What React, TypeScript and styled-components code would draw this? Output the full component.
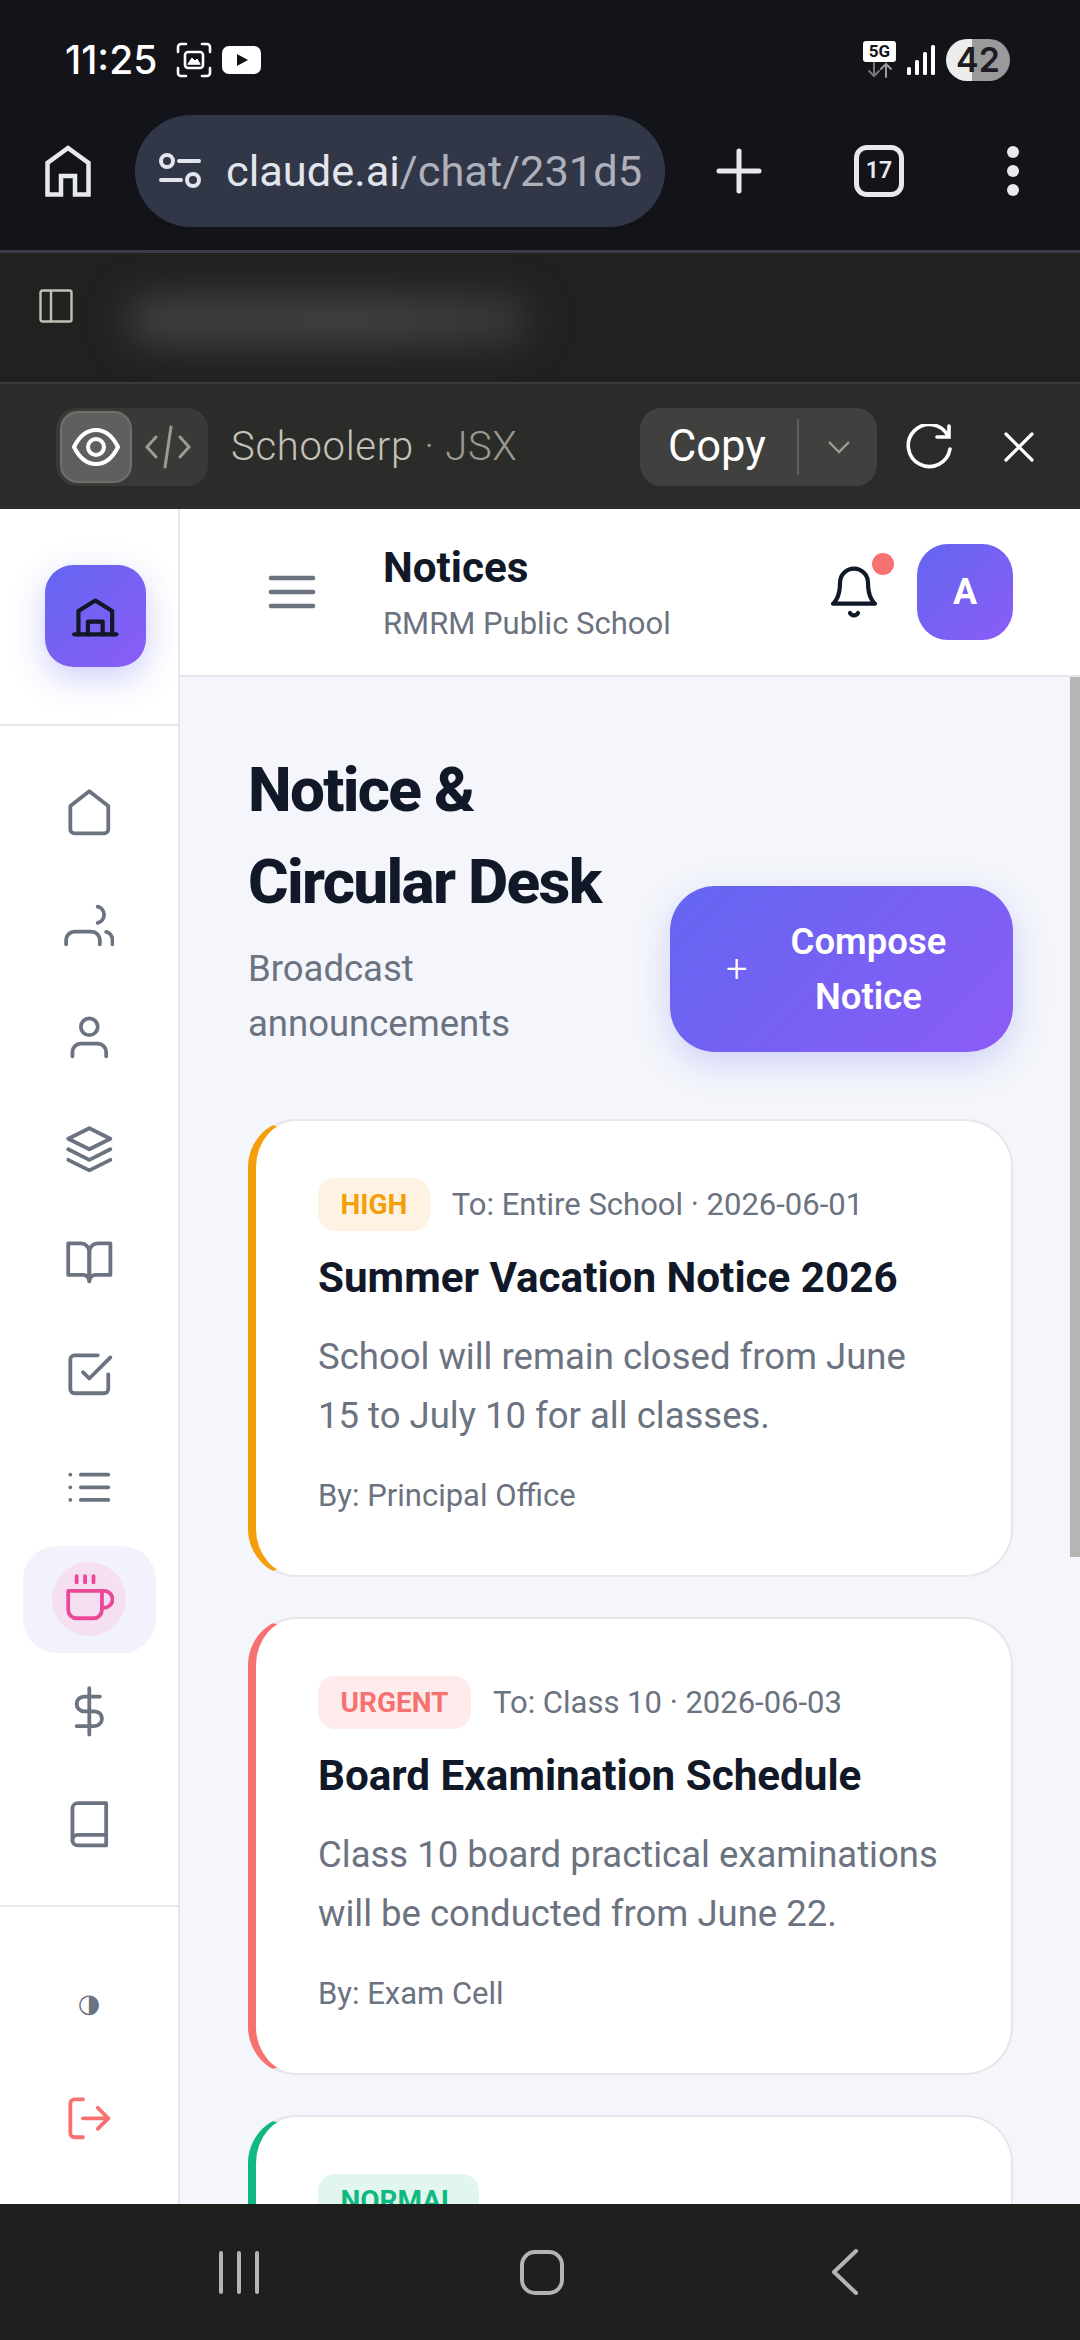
import React from 'react';
import styled, { createGlobalStyle } from 'styled-components';

const Global = createGlobalStyle`
  html, body { margin: 0; padding: 0; background: #12141a; }
  * { box-sizing: border-box; }
  body { font-family: Roboto, "Liberation Sans", sans-serif; }
`;

const Screen = styled.div`
  width: 1080px;
  height: 2340px;
  display: flex;
  flex-direction: column;
  overflow: hidden;
`;

const TopChrome = styled.div`
  background: #12141a;
  height: 253px;
  flex: none;
  border-bottom: 3px solid #3a3d47;
`;

const StatusBar = styled.div`
  height: 115px;
  display: flex;
  align-items: center;
  padding: 4px 70px 0 65px;
  color: #fff;
`;

const Time = styled.span`
  font-size: 39px;
  font-weight: 500;
  width: 111px;
  font-family: Inter, Roboto, sans-serif;
`;

const StatusRight = styled.div`
  margin-left: auto;
  display: flex;
  align-items: center;
  gap: 11px;
`;

const NetStack = styled.div`
  display: flex;
  flex-direction: column;
  align-items: center;
  width: 33px;
`;

const FiveG = styled.span`
  width: 33px;
  height: 21px;
  background: #fff;
  color: #12141a;
  border-radius: 3px;
  font-size: 17px;
  line-height: 21px;
  font-weight: 700;
  text-align: center;
`;

const Battery = styled.span`
  width: 64px;
  height: 42px;
  border-radius: 21px;
  background: linear-gradient(90deg, #ececec 0 41%, #9a9a9a 41% 100%);
  color: #1c1c22;
  font-size: 34px;
  line-height: 42px;
  font-weight: 600;
  text-align: center;
  font-family: Inter, Roboto, sans-serif;
`;

const BrowserBar = styled.div`
  height: 135px;
  display: flex;
  align-items: flex-start;
  padding-left: 45px;
`;

const HomeSlot = styled.div`
  width: 90px;
  padding-top: 30px;
`;

const UrlPill = styled.div`
  width: 530px;
  height: 112px;
  border-radius: 56px;
  background: #323748;
  display: flex;
  align-items: center;
  padding-left: 24px;
  gap: 25px;
  font-size: 43.4px;
  color: #e3e5ec;
  white-space: nowrap;
`;

const UrlPath = styled.span`
  color: #aeb1bc;
`;

const BrowserActions = styled.div`
  display: flex;
  align-items: center;
  height: 112px;
`;

const TabCount = styled.div`
  width: 50px;
  height: 52px;
  border: 5px solid #e8e9ee;
  border-radius: 13px;
  color: #e8e9ee;
  font-size: 23px;
  font-weight: 600;
  line-height: 42px;
  text-align: center;
  margin-left: 92px;
`;

const Kebab = styled.div`
  display: flex;
  flex-direction: column;
  gap: 7px;
  margin-left: 103px;
`;

const KebabDot = styled.span`
  width: 12px;
  height: 12px;
  border-radius: 50%;
  background: #e8e9ee;
`;

const ClaudeHeader = styled.div`
  height: 131px;
  flex: none;
  background: #212120;
  border-bottom: 2px solid #3a3a38;
  display: flex;
  padding: 36px 0 0 39px;
  overflow: hidden;
`;

const BlurredTitle = styled.div`
  width: 400px;
  height: 38px;
  margin: 12px 0 0 55px;
  border-radius: 19px;
  background: linear-gradient(90deg, #4a4a48, #4c4c4a 60%, #3e3e3c);
  filter: blur(21px);
`;

const ArtifactBar = styled.div`
  height: 125px;
  flex: none;
  background: #2b2b29;
  display: flex;
  align-items: center;
  padding: 0 0 0 56px;
`;

const ViewToggle = styled.div`
  width: 152px;
  height: 78px;
  border-radius: 21px;
  background: #393937;
  display: flex;
  align-items: center;
  padding-left: 4px;
`;

const ToggleActive = styled.div`
  width: 72px;
  height: 72px;
  border-radius: 18px;
  background: #5f5f5d;
  border: 2px solid #6e6e6b;
  display: flex;
  align-items: center;
  justify-content: center;
`;

const ToggleIdle = styled.div`
  width: 72px;
  display: flex;
  justify-content: center;
`;

const ArtifactName = styled.span`
  margin-left: 23px;
  font-size: 40px;
  letter-spacing: 0.7px;
  font-weight: 300;
  color: #c4c2b8;
  width: 409px;
`;

const ArtifactType = styled.span`
  color: #9a9890;
`;

const CopyGroup = styled.div`
  width: 237px;
  height: 78px;
  border-radius: 21px;
  background: #40403e;
  display: flex;
  align-items: center;
  padding-left: 28px;
  color: #fff;
  font-size: 43.5px;
  font-weight: 400;
`;

const CopyLabel = styled.span`
  width: 129px;
`;

const CopyDivider = styled.span`
  width: 2px;
  height: 56px;
  background: #5c5c5a;
  margin-right: 28px;
`;

const ToolbarIcons = styled.div`
  display: flex;
  align-items: center;
  gap: 52px;
  margin-left: 29px;
`;

const Body = styled.div`
  flex: 1;
  min-height: 0;
  display: flex;
  position: relative;
  background: #f4f6fb;
`;

const Sidebar = styled.aside`
  width: 180px;
  flex: none;
  background: #fff;
  border-right: 2px solid #e5e7eb;
  display: flex;
  flex-direction: column;
`;

const LogoArea = styled.div`
  height: 217px;
  flex: none;
  border-bottom: 2px solid #e5e7eb;
  display: flex;
  align-items: center;
  justify-content: center;
  padding: 0 0 2px 13px;
`;

const LogoBox = styled.div`
  width: 101px;
  height: 102px;
  border-radius: 28px;
  background: linear-gradient(135deg, #6366f1, #8b5cf6);
  box-shadow: 0 11px 34px rgba(99, 102, 241, 0.32);
  display: flex;
  align-items: center;
  justify-content: center;
`;

const NavList = styled.nav`
  display: flex;
  flex-direction: column;
  align-items: center;
  gap: 5.4px;
  padding: 33px 0 27px;
  border-bottom: 2px solid #e5e7eb;
`;

const FootList = styled.div`
  display: flex;
  flex-direction: column;
  align-items: center;
  gap: 8px;
  padding-top: 43px;
`;

const NavItem = styled.div<{ $active?: boolean }>`
  width: 133px;
  height: 107px;
  flex: none;
  border-radius: 34px;
  display: flex;
  align-items: center;
  justify-content: center;
  background: ${p => (p.$active ? '#f2f2fd' : 'transparent')};
`;

const ActiveDisc = styled.div`
  width: 74px;
  height: 74px;
  border-radius: 50%;
  background: #f5e0f1;
  display: flex;
  align-items: center;
  justify-content: center;
`;

const ThemeGlyph = styled.span`
  font-family: "DejaVu Sans", sans-serif;
  font-size: 26px;
  color: #6b7280;
`;

const Column = styled.div`
  flex: 1;
  min-width: 0;
  display: flex;
  flex-direction: column;
`;

const PageHeader = styled.header`
  height: 168px;
  flex: none;
  background: #fff;
  border-bottom: 2px solid #e5e7eb;
  display: flex;
  align-items: center;
  padding: 0 67px 0 84px;
`;

const HeaderText = styled.div`
  margin-left: 63px;
  flex: 1;
  padding-top: 5px;
`;

const PageTitle = styled.div`
  font-size: 42.2px;
  font-weight: 700;
  color: #111827;
  line-height: 54px;
`;

const PageSub = styled.div`
  font-size: 31px;
  color: #6b7280;
  line-height: 48px;
  margin-top: 5px;
`;

const BellWrap = styled.div`
  position: relative;
  width: 56px;
  height: 56px;
  margin-right: 35px;
`;

const BellDot = styled.span`
  position: absolute;
  left: 46px;
  top: -11px;
  width: 22px;
  height: 22px;
  border-radius: 50%;
  background: #f87171;
`;

const Avatar = styled.div`
  width: 96px;
  height: 96px;
  border-radius: 31px;
  background: linear-gradient(135deg, #6366f1, #8b5cf6);
  color: #fff;
  font-size: 36px;
  font-weight: 700;
  display: flex;
  align-items: center;
  justify-content: center;
`;

const Main = styled.main`
  flex: 1;
  min-height: 0;
  overflow: hidden;
  padding: 67px 67px 0 68px;
`;

const HeadRow = styled.div`
  display: flex;
  justify-content: space-between;
  align-items: flex-end;
  margin-bottom: 67px;
`;

const Heading = styled.h1`
  margin: 0;
  font-size: 62px;
  font-weight: 800;
  line-height: 92px;
  color: #111827;
  letter-spacing: -1.7px;
`;

const HeadingSub = styled.p`
  margin: 13px 0 1px;
  font-size: 36.5px;
  line-height: 55px;
  color: #6b7280;
`;

const ComposeButton = styled.button`
  width: 343px;
  height: 166px;
  flex: none;
  border: 0;
  border-radius: 45px;
  background: linear-gradient(135deg, #6366f1, #8b5cf6);
  box-shadow: 0 11px 34px rgba(99, 102, 241, 0.25);
  color: #fff;
  font-family: inherit;
  font-size: 36.5px;
  font-weight: 600;
  line-height: 55px;
  display: flex;
  align-items: center;
  padding: 0 54px 0 56px;
`;

const PlusGlyph = styled.span`
  width: 52px;
  flex: none;
  text-align: left;
  font-weight: 300;
  font-size: 38px;
`;

const CardList = styled.div`
  display: flex;
  flex-direction: column;
  gap: 40px;
`;

const Card = styled.article<{ $accent: string }>`
  background: #fff;
  border: 2px solid #e5e7eb;
  border-left: 8px solid ${p => p.$accent};
  border-radius: 48px;
  padding: 57px 60px 57px 62px;
`;

const CardMeta = styled.div`
  display: flex;
  align-items: center;
  gap: 22px;
  font-size: 31px;
  color: #6b7280;
`;

const Badge = styled.span<{ $fg: string; $bg: string }>`
  height: 53px;
  padding: 0 22.5px;
  border-radius: 17px;
  background: ${p => p.$bg};
  color: ${p => p.$fg};
  font-size: 28px;
  font-weight: 700;
  line-height: 53px;
`;

const CardTitle = styled.h2`
  margin: 19px 0 0;
  font-size: 42.2px;
  line-height: 56px;
  font-weight: 700;
  color: #111827;
`;

const CardBody = styled.p`
  margin: 21px 0 0;
  font-size: 36.5px;
  line-height: 59px;
  color: #6b7280;
`;

const CardAuthor = styled.div`
  margin-top: 28px;
  font-size: 31px;
  line-height: 45px;
  color: #6b7280;
`;

const ScrollThumb = styled.div`
  position: absolute;
  right: 0;
  top: 168px;
  width: 10px;
  height: 880px;
  background: #b5b5b5;
`;

const NavBar = styled.div`
  height: 136px;
  flex: none;
  background: #1f1f1e;
  position: relative;
  z-index: 1;
  display: flex;
  align-items: center;
  padding: 0 0 0 219px;
`;

const RecentBars = styled.div`
  display: flex;
  gap: 14px;
  width: 301px;
`;

const RecentBar = styled.span`
  width: 4px;
  height: 43px;
  border-radius: 2px;
  background: #b4b4b2;
`;

const HomeKey = styled.span`
  width: 44px;
  height: 45px;
  border: 4px solid #b4b4b2;
  border-radius: 15px;
  margin-right: 267px;
`;

type Glyph = React.ReactNode;

const Svg = ({ size, color, sw = 2, children }: { size: number; color: string; sw?: number; children: Glyph }) => (
  <svg width={size} height={size} viewBox="0 0 24 24" fill="none" stroke={color} strokeWidth={sw} strokeLinecap="round" strokeLinejoin="round">
    {children}
  </svg>
);

const navIcons: Glyph[] = [
  <path key="a" d="M3 9l9-7 9 7v11a2 2 0 0 1-2 2H5a2 2 0 0 1-2-2z" />,
  <g key="b">
    <path d="M17 21v-2a4 4 0 0 0-4-4H5a4 4 0 0 0-4 4v2" />
    <path d="M23 21v-2a4 4 0 0 0-3-3.87" />
    <path d="M16 3.13a4 4 0 0 1 0 7.75" />
  </g>,
  <g key="c">
    <path d="M20 21v-2a4 4 0 0 0-4-4H8a4 4 0 0 0-4 4v2" />
    <circle cx="12" cy="7" r="4" />
  </g>,
  <g key="d">
    <path d="M12 2 2 7l10 5 10-5-10-5z" />
    <path d="M2 17l10 5 10-5" />
    <path d="M2 12l10 5 10-5" />
  </g>,
  <g key="e">
    <path d="M2 3h6a4 4 0 0 1 4 4v14a3 3 0 0 0-3-3H2z" />
    <path d="M22 3h-6a4 4 0 0 0-4 4v14a3 3 0 0 1 3-3h7z" />
  </g>,
  <g key="f">
    <path d="M9 11l3 3L22 4" />
    <path d="M21 12v7a2 2 0 0 1-2 2H5a2 2 0 0 1-2-2V5a2 2 0 0 1 2-2h11" />
  </g>,
  <g key="g">
    <path d="M8 6h13M8 12h13M8 18h13M3 6h.01M3 12h.01M3 18h.01" />
  </g>,
];

const coffee = (
  <g>
    <path d="M18 8h1a4 4 0 0 1 0 8h-1" />
    <path d="M2 8h16v9a4 4 0 0 1-4 4H6a4 4 0 0 1-4-4V8z" />
    <path d="M6 1v3M10 1v3M14 1v3" />
  </g>
);

const dollar = (
  <g>
    <path d="M12 1v22" />
    <path d="M17 5H9.5a3.5 3.5 0 0 0 0 7h5a3.5 3.5 0 0 1 0 7H6" />
  </g>
);

const book = (
  <g>
    <path d="M4 19.5A2.5 2.5 0 0 1 6.5 17H20" />
    <path d="M6.5 2H20v20H6.5A2.5 2.5 0 0 1 4 19.5v-15A2.5 2.5 0 0 1 6.5 2z" />
  </g>
);

const NAV_ICON = 50.6;

const notices = [
  {
    level: 'HIGH', fg: '#f59e0b', bg: '#fef3e2', meta: 'To: Entire School · 2026-06-01',
    title: 'Summer Vacation Notice 2026',
    body: 'School will remain closed from June 15 to July 10 for all classes.',
    by: 'By: Principal Office',
  },
  {
    level: 'URGENT', fg: '#f87171', bg: '#feecec', meta: 'To: Class 10 · 2026-06-03',
    title: 'Board Examination Schedule',
    body: 'Class 10 board practical examinations will be conducted from June 22.',
    by: 'By: Exam Cell',
  },
  { level: 'NORMAL', fg: '#10b981', bg: '#e1f6ee' },
];

export default function App() {
  return (
    <Screen>
      <Global />
      <TopChrome>
        <StatusBar>
          <Time>11:25</Time>
          <svg width="36" height="36" viewBox="0 0 36 36" fill="none" stroke="#fff" strokeWidth="2.6" strokeLinecap="round">
            <path d="M2 10V5a3 3 0 0 1 3-3h5M26 2h5a3 3 0 0 1 3 3v5M34 26v5a3 3 0 0 1-3 3h-5M10 34H5a3 3 0 0 1-3-3v-5" />
            <rect x="9" y="10" width="18" height="16" rx="3" />
            <path d="M12 22l4-6 3 3 2-2 3 5z" fill="#fff" strokeWidth="1" />
          </svg>
          <svg width="39" height="28" viewBox="0 0 39 28" style={{ marginLeft: 10 }}>
            <rect width="39" height="28" rx="7" fill="#fff" />
            <path d="M15 8l11 6-11 6z" fill="#12141a" />
          </svg>
          <StatusRight>
            <NetStack>
              <FiveG>5G</FiveG>
              <svg width="26" height="16" viewBox="0 0 26 16" fill="none" strokeWidth="2" strokeLinecap="round">
                <path d="M7 1v13M2 9l5 5 5-5" stroke="#77787c" />
                <path d="M19 15V2M14 7l5-5 5 5" stroke="#9a9b9e" />
              </svg>
            </NetStack>
            <svg width="28" height="30" viewBox="0 0 28 30" fill="#fff">
              <rect x="0" y="22" width="4" height="8" rx="1.5" />
              <rect x="8" y="15" width="4" height="15" rx="1.5" />
              <rect x="16" y="7" width="4" height="23" rx="1.5" />
              <rect x="24" y="0" width="4" height="30" rx="1.5" />
            </svg>
            <Battery>42</Battery>
          </StatusRight>
        </StatusBar>
        <BrowserBar>
          <HomeSlot>
            <svg width="46" height="52" viewBox="0 0 46 52" fill="none" stroke="#e8e9ee" strokeWidth="4.5" strokeLinejoin="miter">
              <path d="M2.5 49.5V18L23 3l20.5 15v31.500H30V31H16v18.500z" />
            </svg>
          </HomeSlot>
          <UrlPill>
            <svg width="42" height="36" viewBox="0 0 42 36" fill="none" stroke="#e3e5ec" strokeWidth="4" strokeLinecap="round">
              <circle cx="8" cy="8" r="6" />
              <path d="M20 8h20M2 27h20" />
              <circle cx="34" cy="27" r="6" />
            </svg>
            <span>claude.ai<UrlPath>/chat/231d5</UrlPath></span>
          </UrlPill>
          <BrowserActions>
            <svg width="46" height="46" viewBox="0 0 46 46" stroke="#e8e9ee" strokeWidth="5" strokeLinecap="round" style={{ marginLeft: 51 }}>
              <path d="M23 3v40M3 23h40" />
            </svg>
            <TabCount>17</TabCount>
            <Kebab>
              <KebabDot />
              <KebabDot />
              <KebabDot />
            </Kebab>
          </BrowserActions>
        </BrowserBar>
      </TopChrome>

      <ClaudeHeader>
        <svg width="34" height="34" viewBox="0 0 34 34" fill="none" stroke="#c2c0b6" strokeWidth="2.4">
          <rect x="1.500" y="1.500" width="31" height="31" rx="2" />
          <path d="M12 2v30" />
        </svg>
        <BlurredTitle />
      </ClaudeHeader>

      <ArtifactBar>
        <ViewToggle>
          <ToggleActive>
            <svg width="48" height="40" viewBox="0 0 48 40" fill="none" stroke="#fff" strokeWidth="4">
              <path d="M2 20C8 8 16 3 24 3s16 5 22 17c-6 12-14 17-22 17S8 32 2 20z" />
              <circle cx="24" cy="20" r="8" />
            </svg>
          </ToggleActive>
          <ToggleIdle>
            <svg width="46" height="44" viewBox="0 0 46 44" fill="none" stroke="#9c9a92" strokeWidth="3" strokeLinecap="round">
              <path d="M11 12 2 22l9 10M35 12l9 10-9 10M26 2l-6 40" />
            </svg>
          </ToggleIdle>
        </ViewToggle>
        <ArtifactName>Schoolerp <ArtifactType>· JSX</ArtifactType></ArtifactName>
        <CopyGroup>
          <CopyLabel>Copy</CopyLabel>
          <CopyDivider />
          <svg width="24" height="14" viewBox="0 0 24 14" fill="none" stroke="#9c9a92" strokeWidth="2.4">
            <path d="M2 2l10 10L22 2" />
          </svg>
        </CopyGroup>
        <ToolbarIcons>
          <svg width="46" height="46" viewBox="0 0 46 46" fill="none" stroke="#fff" strokeWidth="3.6" strokeLinecap="round">
            <path d="M42 12A21 21 0 1 0 44 25" />
            <path d="M43 2v11H31" />
          </svg>
          <svg width="30" height="30" viewBox="0 0 30 30" stroke="#fff" strokeWidth="3.2" strokeLinecap="round">
            <path d="M2 2l26 26M28 2 2 28" />
          </svg>
        </ToolbarIcons>
      </ArtifactBar>

      <Body>
        <Sidebar>
          <LogoArea>
            <LogoBox>
              <Svg size={NAV_ICON} color="#111827">
                <path d="M2 21h20" />
                <path d="M4 21V10l8-5 8 5v11" />
                <path d="M8.500 21v-6h7v6" />
              </Svg>
            </LogoBox>
          </LogoArea>
          <NavList>
            {navIcons.map((icon, i) => (
              <NavItem key={i}>
                <Svg size={NAV_ICON} color="#6b7280" sw={1.8}>{icon}</Svg>
              </NavItem>
            ))}
            <NavItem $active>
              <ActiveDisc>
                <Svg size={NAV_ICON} color="#ec4899" sw={1.8}>{coffee}</Svg>
              </ActiveDisc>
            </NavItem>
            <NavItem>
              <Svg size={NAV_ICON} color="#6b7280" sw={1.8}>{dollar}</Svg>
            </NavItem>
            <NavItem>
              <Svg size={NAV_ICON} color="#6b7280" sw={1.8}>{book}</Svg>
            </NavItem>
          </NavList>
          <FootList>
            <NavItem>
              <ThemeGlyph>◑</ThemeGlyph>
            </NavItem>
            <NavItem>
              <Svg size={NAV_ICON} color="#f87171" sw={1.8}>
                <path d="M9 21H5a2 2 0 0 1-2-2V5a2 2 0 0 1 2-2h4" />
                <path d="M16 17l5-5-5-5" />
                <path d="M21 12H9" />
              </Svg>
            </NavItem>
          </FootList>
        </Sidebar>

        <Column>
          <PageHeader>
            <Svg size={56} color="#6b7280">
              <path d="M3 6h18M3 12h18M3 18h18" />
            </Svg>
            <HeaderText>
              <PageTitle>Notices</PageTitle>
              <PageSub>RMRM Public School</PageSub>
            </HeaderText>
            <BellWrap>
              <Svg size={56} color="#111827" sw={1.8}>
                <path d="M18 8A6 6 0 0 0 6 8c0 7-3 9-3 9h18s-3-2-3-9" />
                <path d="M13.730 21a2 2 0 0 1-3.460 0" />
              </Svg>
              <BellDot />
            </BellWrap>
            <Avatar>A</Avatar>
          </PageHeader>
          <Main>
            <HeadRow>
              <div>
                <Heading>Notice &<br />Circular Desk</Heading>
                <HeadingSub>Broadcast<br />announcements</HeadingSub>
              </div>
              <ComposeButton>
                <PlusGlyph>+</PlusGlyph>
                <span>Compose Notice</span>
              </ComposeButton>
            </HeadRow>
            <CardList>
              {notices.map(n => (
                <Card key={n.level} $accent={n.fg}>
                  <CardMeta>
                    <Badge $fg={n.fg} $bg={n.bg}>{n.level}</Badge>
                    {n.meta && <span>{n.meta}</span>}
                  </CardMeta>
                  {n.title && <CardTitle>{n.title}</CardTitle>}
                  {n.body && <CardBody>{n.body}</CardBody>}
                  {n.by && <CardAuthor>{n.by}</CardAuthor>}
                </Card>
              ))}
            </CardList>
          </Main>
        </Column>
        <ScrollThumb />
      </Body>

      <NavBar>
        <RecentBars>
          <RecentBar />
          <RecentBar />
          <RecentBar />
        </RecentBars>
        <HomeKey />
        <svg width="28" height="46" viewBox="0 0 28 46" fill="none" stroke="#b4b4b2" strokeWidth="4" strokeLinecap="round" strokeLinejoin="round">
          <path d="M25 2 3 23l22 21" />
        </svg>
      </NavBar>
    </Screen>
  );
}
